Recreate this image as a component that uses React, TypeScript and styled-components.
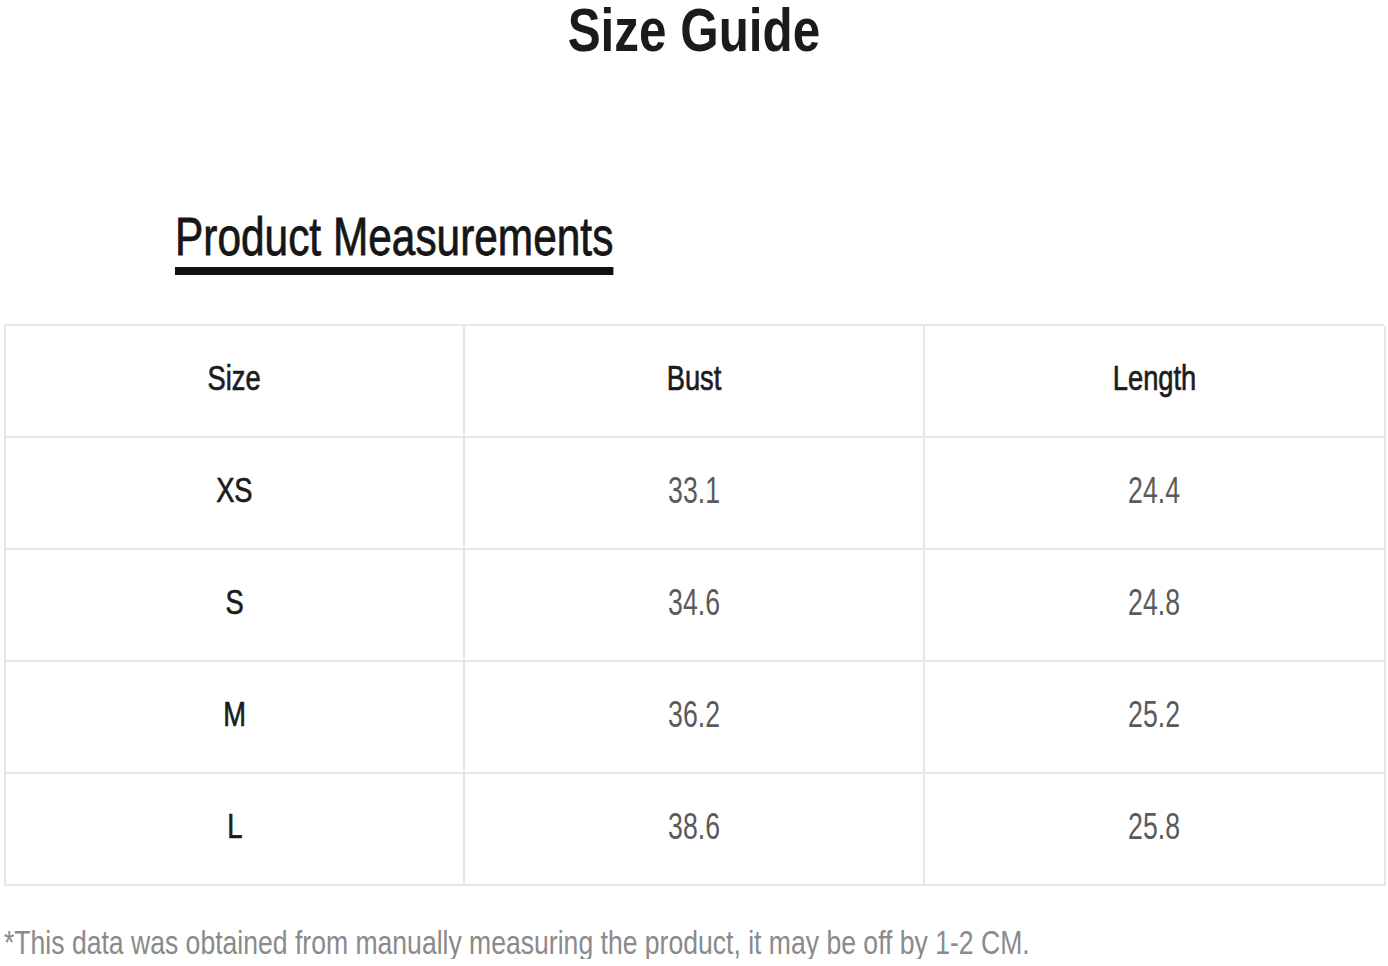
import React from 'react';
import styled, { createGlobalStyle } from 'styled-components';

const GlobalStyle = createGlobalStyle`
  html, body {
    margin: 0;
    padding: 0;
    background: #ffffff;
  }
  body {
    font-family: "Liberation Sans", Arial, sans-serif;
  }
`;

const rows = [
  { size: 'XS', bust: '33.1', length: '24.4' },
  { size: 'S', bust: '34.6', length: '24.8' },
  { size: 'M', bust: '36.2', length: '25.2' },
  { size: 'L', bust: '38.6', length: '25.8' },
];

const Page = styled.div`
  width: 1388px;
  display: flex;
  flex-direction: column;
`;

const Title = styled.h1`
  margin: 0;
  padding-top: 4px;
  height: 52px;
  display: flex;
  justify-content: center;
  font-size: 61px;
  line-height: 52px;
  font-weight: 700;
  color: #1b1b1b;

  span {
    display: inline-block;
    transform: scaleX(0.81);
  }
`;

const SectionHead = styled.div`
  margin-top: 154px;
  padding-left: 175px;
  display: flex;
`;

const SectionTitle = styled.h2`
  margin: 0;
  display: inline-block;
  font-size: 53px;
  line-height: 53px;
  font-weight: 400;
  color: #161616;
  padding-bottom: 4px;
  border-bottom: 8px solid #111111;
  transform: scaleX(0.8);
  transform-origin: left center;
  -webkit-text-stroke: 0.8px #161616;
`;

const Table = styled.div`
  margin: 49px 0 0 4px;
  width: 1380px;
  display: grid;
  grid-template-columns: 459px 460px 461px;
  grid-auto-rows: 112px;
  border-top: 2px solid #e6e6e6;
  border-left: 2px solid #e6e6e6;
  box-sizing: border-box;
`;

const Cell = styled.div<{ $tone: 'head' | 'value' }>`
  display: flex;
  align-items: center;
  justify-content: center;
  padding-bottom: ${(p) => (p.$tone === 'head' ? '8px' : '4px')};
  border-right: 2px solid #e6e6e6;
  border-bottom: 2px solid #e6e6e6;
  font-size: ${(p) => (p.$tone === 'head' ? '35px' : '36px')};
  line-height: 1;
  color: ${(p) => (p.$tone === 'head' ? '#1c1c1c' : '#5a5a5a')};

  span {
    display: inline-block;
    transform: scaleX(${(p) => (p.$tone === 'head' ? 0.78 : 0.74)});
    ${(p) => p.$tone === 'head' && '-webkit-text-stroke: 0.7px #1c1c1c;'}
  }
`;

const Note = styled.p`
  margin: 40px 0 0 4px;
  font-size: 33px;
  line-height: 33px;
  color: #8a8a8a;
  white-space: nowrap;
  transform: scaleX(0.805);
  transform-origin: left center;
`;

export default function App() {
  return (
    <>
      <GlobalStyle />
      <Page>
        <Title>
          <span>Size Guide</span>
        </Title>
        <SectionHead>
          <SectionTitle>Product Measurements</SectionTitle>
        </SectionHead>
        <Table>
          <Cell $tone="head"><span>Size</span></Cell>
          <Cell $tone="head"><span>Bust</span></Cell>
          <Cell $tone="head"><span>Length</span></Cell>
          {rows.map((r) => (
            <React.Fragment key={r.size}>
              <Cell $tone="head"><span>{r.size}</span></Cell>
              <Cell $tone="value"><span>{r.bust}</span></Cell>
              <Cell $tone="value"><span>{r.length}</span></Cell>
            </React.Fragment>
          ))}
        </Table>
        <Note>*This data was obtained from manually measuring the product, it may be off by 1-2 CM.</Note>
      </Page>
    </>
  );
}
